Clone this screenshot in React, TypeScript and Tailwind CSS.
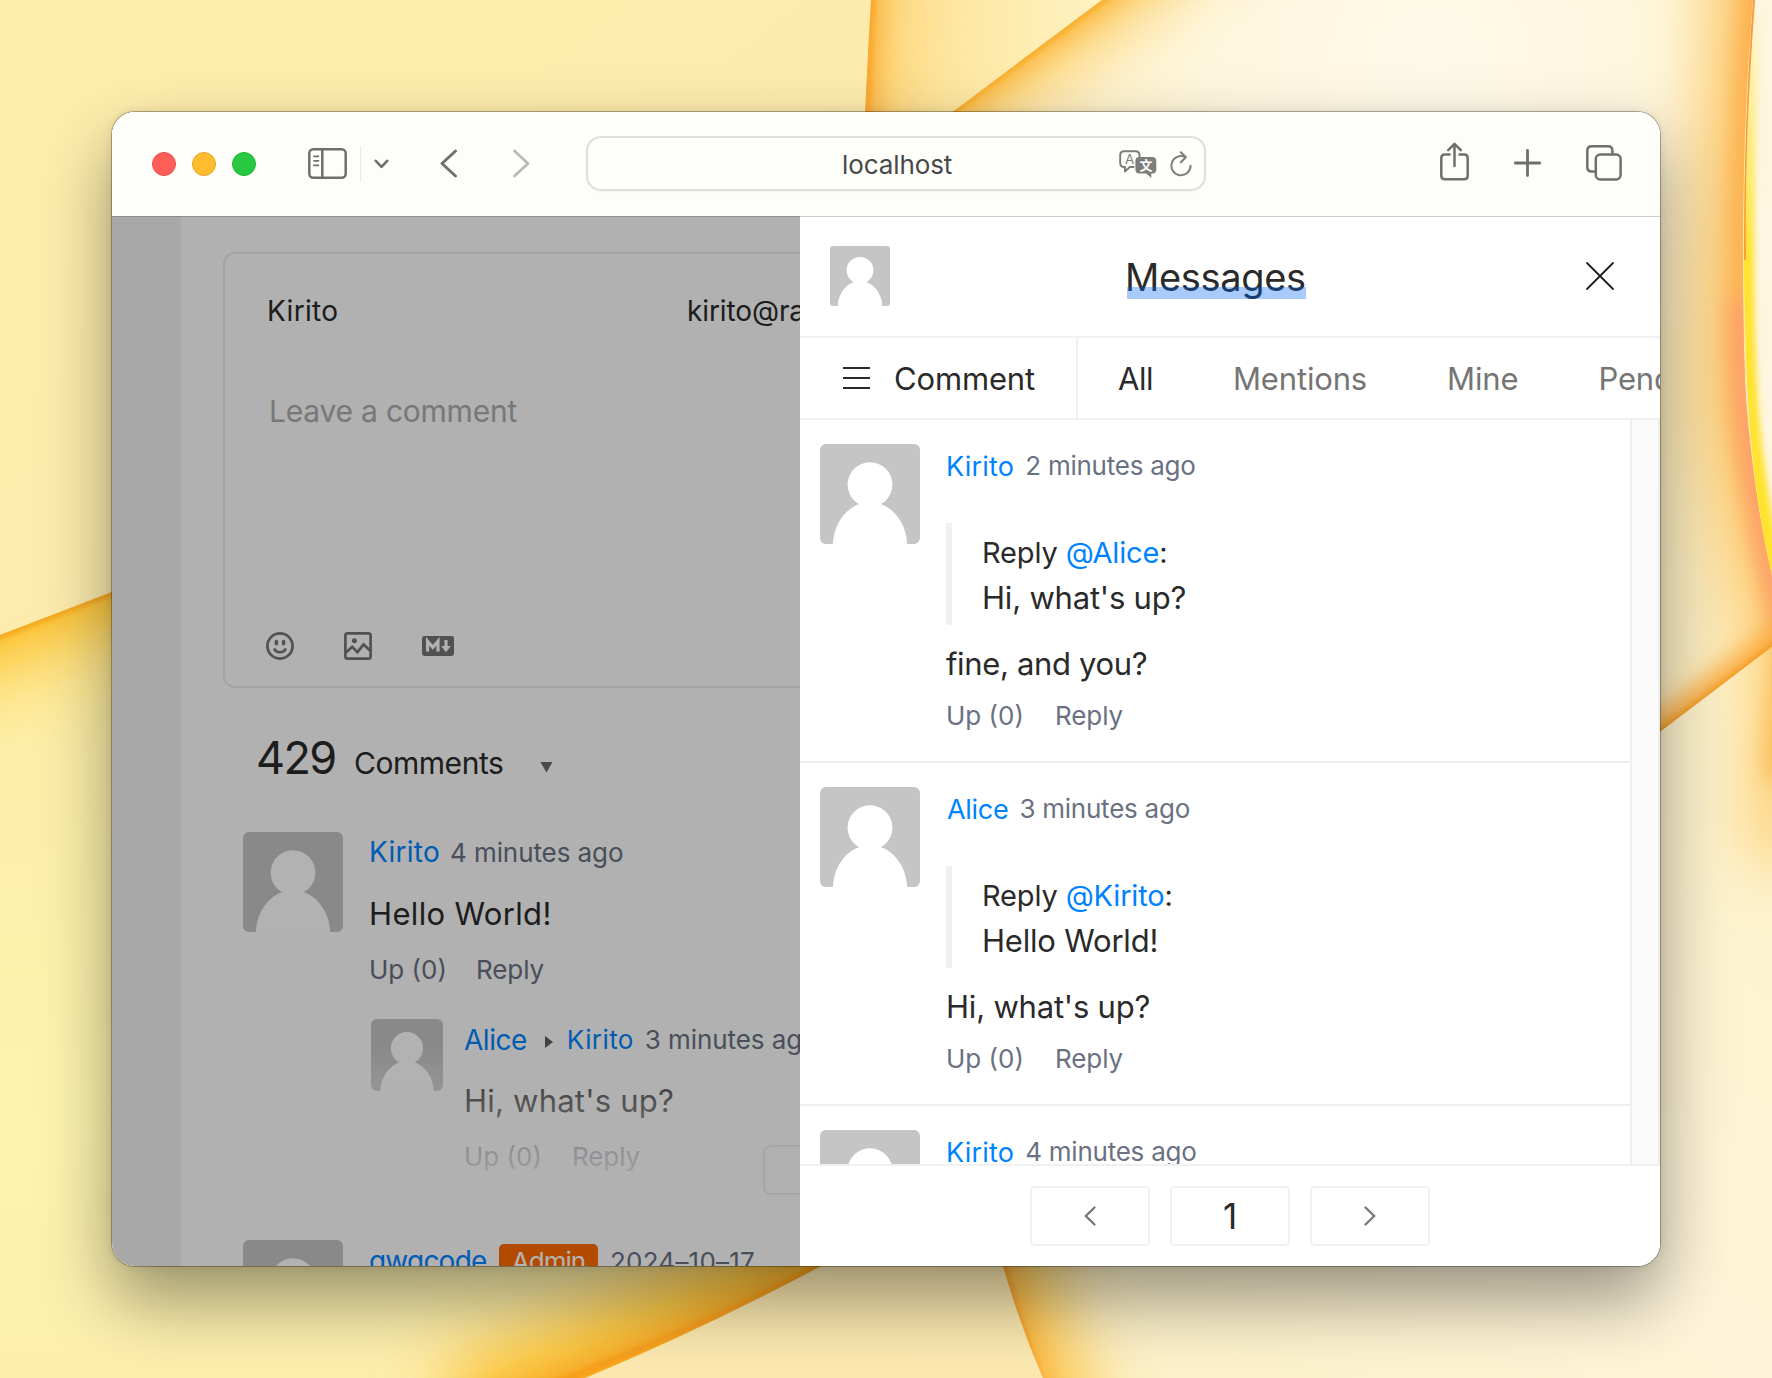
import React from 'react'

/* ---------- wallpaper ---------- */

function Wallpaper() {
  return (
    <svg className="absolute inset-0" width="1772" height="1378" viewBox="0 0 1772 1378">
      <defs>
        <linearGradient id="baseFill" x1="0" y1="0" x2="1" y2="1">
          <stop offset="0" stopColor="#feeeac" />
          <stop offset="0.4" stopColor="#fdeaae" />
          <stop offset="1" stopColor="#fbe7b2" />
        </linearGradient>
        <linearGradient id="leftFill" x1="0" y1="0" x2="0" y2="1">
          <stop offset="0" stopColor="#fee67e" />
          <stop offset="0.3" stopColor="#fdeeaa" />
          <stop offset="0.7" stopColor="#fdf3ae" />
          <stop offset="1" stopColor="#fdeeae" />
        </linearGradient>
        <linearGradient id="topFill" x1="0" y1="0" x2="1" y2="0">
          <stop offset="0" stopColor="#fddd86" />
          <stop offset="1" stopColor="#fef3c4" />
        </linearGradient>
        <radialGradient id="rightFill" gradientUnits="userSpaceOnUse" cx="1430" cy="60" r="420">
          <stop offset="0" stopColor="#fef9e8" />
          <stop offset="0.5" stopColor="#fef7df" />
          <stop offset="1" stopColor="#fdefc4" />
        </radialGradient>
        <linearGradient id="lowFill" x1="0" y1="1" x2="1" y2="0">
          <stop offset="0" stopColor="#fdf0c4" />
          <stop offset="0.5" stopColor="#fef5da" />
          <stop offset="1" stopColor="#fdf1c8" />
        </linearGradient>
        <filter id="b40" filterUnits="userSpaceOnUse" x="-200" y="-200" width="2172" height="1778">
          <feGaussianBlur stdDeviation="34" />
        </filter>
        <filter id="b12" filterUnits="userSpaceOnUse" x="-200" y="-200" width="2172" height="1778">
          <feGaussianBlur stdDeviation="12" />
        </filter>
        <filter id="b3" filterUnits="userSpaceOnUse" x="-200" y="-200" width="2172" height="1778">
          <feGaussianBlur stdDeviation="3" />
        </filter>
        <clipPath id="cLeft">
          <path d="M0 635L112 592L900 300L960 1190L821 1266Q700 1330 585 1378H0Z" />
        </clipPath>
        <clipPath id="cTop">
          <path d="M871 0H1102L952 112L700 300L858 300Q862 160 871 0Z" />
        </clipPath>
        <clipPath id="cRight">
          <path d="M1102 0H1753C1740 150 1742 320 1746 400Q1754 500 1772 570V647L1660 732L1400 900L760 256Z" />
        </clipPath>
        <clipPath id="cFar">
          <path d="M1753 0H1772V575Q1754 500 1748 400C1742 300 1742 150 1753 0Z" />
        </clipPath>
        <clipPath id="cLow">
          <path d="M1772 647L1660 732L940 1060L1003 1266Q1020 1325 1043 1378H1772Z" />
        </clipPath>
        <linearGradient id="rim" x1="0" y1="0" x2="0" y2="1">
          <stop offset="0" stopColor="#ffe32e" stopOpacity="0" />
          <stop offset="0.4" stopColor="#ffe32e" />
          <stop offset="1" stopColor="#ffe32e" />
        </linearGradient>
      </defs>

      <rect width="1772" height="1378" fill="url(#baseFill)" />

      <g clipPath="url(#cLeft)">
        <rect y="500" width="1000" height="878" fill="url(#leftFill)" />
        <g fill="none" stroke="#fbc02d">
          <path d="M-160 696L0 635L112 592L300 520" strokeWidth="60" filter="url(#b40)" />
          <path d="M1000 1168L821 1266Q700 1330 460 1420" strokeWidth="110" filter="url(#b40)" />
          <path d="M-160 696L0 635L112 592L300 520" strokeWidth="18" filter="url(#b12)" />
          <path d="M1000 1168L821 1266Q700 1330 460 1420" stroke="#f8a82c" strokeWidth="24" filter="url(#b12)" />
          <path d="M-160 696L0 635L112 592L300 520M1000 1168L821 1266Q700 1330 460 1420" stroke="#f59211" strokeWidth="5" filter="url(#b3)" />
        </g>
      </g>

      <g clipPath="url(#cTop)">
        <rect x="840" width="262" height="300" fill="url(#topFill)" />
        <g fill="none">
          <path d="M876 -100Q864 160 858 340" stroke="#fcc860" strokeWidth="40" filter="url(#b40)" />
          <path d="M876 -100Q864 160 858 340" stroke="#fbb03a" strokeWidth="22" filter="url(#b12)" />
          <path d="M876 -100Q864 160 858 340" stroke="#fb9a18" strokeWidth="5" filter="url(#b3)" />
        </g>
      </g>

      <g clipPath="url(#cRight)">
        <rect x="760" width="1012" height="900" fill="url(#rightFill)" />
        <g fill="none" stroke="#fcc95a">
          <path d="M1236 -100L1102 0L952 112L700 300" strokeWidth="60" filter="url(#b40)" />
          <path d="M1236 -100L1102 0L952 112L700 300" stroke="#fbb234" strokeWidth="20" filter="url(#b12)" />
          <path d="M1236 -100L1102 0L952 112L700 300" stroke="#f79c10" strokeWidth="4" filter="url(#b3)" />
          <path d="M1763 -100C1740 150 1742 320 1746 400Q1754 500 1810 700" stroke="#fcc460" strokeWidth="80" filter="url(#b40)" />
          <path d="M1763 -100C1740 150 1742 320 1746 400Q1754 500 1810 700" stroke="#fda843" strokeWidth="24" filter="url(#b12)" />
          <path d="M1744 300Q1748 500 1800 660" stroke="#fd9a78" strokeWidth="22" filter="url(#b12)" />
          <path d="M1880 566L1660 732L1500 850" stroke="#fba838" strokeWidth="30" filter="url(#b12)" />
          <path d="M1880 566L1660 732L1500 850" stroke="#ef8a10" strokeWidth="4" filter="url(#b3)" />
        </g>
      </g>

      <g clipPath="url(#cFar)">
        <rect x="1730" width="42" height="600" fill="#fff6e2" />
        <path d="M1753 0C1742 150 1742 300 1748 400Q1754 500 1790 640" fill="none" stroke="url(#rim)" strokeWidth="20" filter="url(#b3)" />
        <path d="M1753 0C1744 120 1743 200 1744 260" fill="none" stroke="#fb9a3a" strokeWidth="4" />
      </g>

      <g clipPath="url(#cLow)">
        <rect x="900" y="600" width="872" height="778" fill="url(#lowFill)" />
        <g fill="none" stroke="#fcc850">
          <path d="M960 1120L1003 1266Q1020 1325 1080 1500" strokeWidth="90" filter="url(#b40)" />
          <path d="M960 1120L1003 1266Q1020 1325 1080 1500" stroke="#fbb540" strokeWidth="24" filter="url(#b12)" />
          <path d="M960 1120L1003 1266Q1020 1325 1080 1500" stroke="#f7961a" strokeWidth="5" filter="url(#b3)" />
          <path d="M1800 560L1784 780" stroke="#fba42c" strokeWidth="36" filter="url(#b12)" />
          <path d="M1800 560L1784 860" stroke="#fcc862" strokeWidth="60" filter="url(#b40)" />
        </g>
      </g>
    </svg>
  )
}

/* ---------- shared pieces ---------- */

function Avatar({ className }: { className: string }) {
  return (
    <svg viewBox="0 0 100 100" className={`shrink-0 bg-[#c5c5c5] ${className}`}>
      <circle cx="50" cy="40.6" r="22.4" fill="#fff" />
      <path d="M12.8 100C14 80 25 65 39.5 60H60.5C75 65 86 80 87.2 100Z" fill="#fff" />
    </svg>
  )
}

function ToolbarIcon({ className, viewBox, children }: { className: string; viewBox: string; children: React.ReactNode }) {
  return (
    <svg viewBox={viewBox} className={`shrink-0 ${className}`} fill="none" stroke="#6f6f6e" strokeWidth="2.5" strokeLinecap="round" strokeLinejoin="round">
      {children}
    </svg>
  )
}

/* ---------- browser toolbar ---------- */

function Toolbar() {
  return (
    <div className="flex h-[105px] shrink-0 items-center border-b border-[#cdcdc9] bg-[#fdfdf9] pl-[40px]">
      <div className="flex gap-4">
        <span className="size-6 rounded-full border border-[#e9524a] bg-[#ff5f57]" />
        <span className="size-6 rounded-full border border-[#e5a726] bg-[#febc2e]" />
        <span className="size-6 rounded-full border border-[#23b338] bg-[#28c840]" />
      </div>
      <ToolbarIcon className="mb-[2px] ml-[52px] h-[31px] w-[39px]" viewBox="0 0 39 31">
        <rect x="1.3" y="1.3" width="36.4" height="28.4" rx="4" />
        <path d="M14.3 1.5V29.5" />
        <path d="M6 8.3h4.4M6 12.8h4.4M6 17.3h4.4" strokeWidth="1.8" />
      </ToolbarIcon>
      <span className="ml-[13px] h-[36px] w-px bg-[#e9e9e6]" />
      <ToolbarIcon className="mb-px ml-[13px] h-[10px] w-[15px]" viewBox="0 0 15 10">
        <path d="M1.8 1.8L7.5 7.8L13.2 1.8" strokeWidth="2.6" />
      </ToolbarIcon>
      <ToolbarIcon className="mb-[2px] ml-[51px] h-[29px] w-[18px]" viewBox="0 0 18 29">
        <path d="M15.5 2L2 14.5L15.5 27" strokeWidth="2.9" />
      </ToolbarIcon>
      <svg viewBox="0 0 18 29" className="mb-[2px] ml-[54px] h-[29px] w-[18px] shrink-0" fill="none" stroke="#b9b9b7" strokeWidth="2.7" strokeLinecap="round" strokeLinejoin="round">
        <path d="M2.5 2L16 14.5L2.5 27" />
      </svg>
      <div className="mb-px ml-[56px] flex h-[55px] w-[620px] items-center rounded-[15px] border-2 border-[#dededb] bg-[#fefefb] shadow-[0_1px_2px_rgba(0,0,0,0.04)]">
        <span className="mt-[3px] ml-[254px] w-[277px] text-[26px] leading-[40px] tracking-[-0.1px] text-[#48484a]">localhost</span>
        <svg viewBox="0 0 38 28" className="h-[28px] w-[38px] shrink-0" fill="none">
          <path d="M20.5 9V5.2Q20.5 1.2 16.5 1.2H5.2Q1.2 1.2 1.2 5.2V13Q1.2 17 5.2 17H6v4.4L10.8 17H14.5" stroke="#7d7d7c" strokeWidth="2" strokeLinejoin="round" strokeLinecap="round" />
          <text x="10.6" y="13.9" fontSize="13.5" fill="#7d7d7c" textAnchor="middle">A</text>
          <path d="M20.5 7H33Q37.3 7 37.3 11V19.5Q37.3 23.5 33 23.5H32.3V28L27.2 23.5H20.5Q16.4 23.5 16.4 19.5V11Q16.4 7 20.5 7Z" fill="#7d7d7c" />
          <text x="26.9" y="20.2" fontSize="13" fontWeight="700" fill="#fff" textAnchor="middle" className="font-['Noto_Sans_CJK_SC',sans-serif]">文</text>
        </svg>
        <svg viewBox="0 0 22 26" className="ml-[13px] h-[26px] w-[22px] shrink-0" fill="none" stroke="#7d7d7c" strokeWidth="2" strokeLinecap="round" strokeLinejoin="round">
          <path d="M15.3 6.1A9.6 9.6 0 1 0 20.6 14.8" />
          <path d="M10.8 1.2L15.8 6.2L10.8 11.2" />
        </svg>
      </div>
      <ToolbarIcon className="mb-[5px] ml-[234px] h-[39px] w-[29px]" viewBox="0 0 29 39">
        <path d="M9.5 12.6H4.8Q1.3 12.6 1.3 16.1V33.8Q1.3 37.3 4.8 37.3H24.2Q27.7 37.3 27.7 33.8V16.1Q27.7 12.6 24.2 12.6H19.5" />
        <path d="M14.5 24V2M8.2 8.2L14.5 1.8L20.8 8.2" />
      </ToolbarIcon>
      <ToolbarIcon className="mb-[3px] ml-[45px] h-[28px] w-[27px]" viewBox="0 0 27 28">
        <path d="M13.5 1.5V26.5M1.3 14H25.7" strokeWidth="2.8" />
      </ToolbarIcon>
      <ToolbarIcon className="mb-[3px] ml-[45px] h-[36px] w-[36px]" viewBox="0 0 36 36">
        <rect x="9.8" y="9.6" width="24.8" height="24.8" rx="4.5" />
        <path d="M9.5 26.4H5.8Q1.3 26.4 1.3 21.9V5.8Q1.3 1.3 5.8 1.3H21.9Q26.4 1.3 26.4 5.8V9.3" />
      </ToolbarIcon>
    </div>
  )
}

/* ---------- page underneath the drawer ---------- */

function Editor() {
  return (
    <div className="mt-[35px] ml-[42px] flex h-[436px] w-[1350px] flex-col rounded-[12px] border-2 border-[#ebebeb] pt-[37px] pb-[26px] pl-[42px] text-[#2a2a2a]">
      <div className="flex text-[28px] leading-[40px]">
        <span className="w-[420px] tracking-[0.3px]">Kirito</span>
        <span className="tracking-[-0.1px]">kirito@ra.com</span>
      </div>
      <div className="mt-[60px] ml-[2px] text-[30px] leading-[40px] tracking-[-0.22px] text-[#acacac]">Leave a comment</div>
      <div className="mt-auto flex h-[28px] items-center text-[#757575]">
        <svg viewBox="0 0 28 28" className="-ml-px size-[28px]" fill="none" stroke="currentColor" strokeWidth="2.7">
          <circle cx="14" cy="14" r="12.6" />
          <path d="M8.3 16.4a5.9 5.2 0 0 0 11.4 0" />
          <ellipse cx="10.4" cy="10.6" rx="1.8" ry="2.9" fill="currentColor" stroke="none" />
          <ellipse cx="17.6" cy="10.6" rx="1.8" ry="2.9" fill="currentColor" stroke="none" />
        </svg>
        <svg viewBox="0 0 28 28" className="ml-[50px] size-[28px]" fill="none" stroke="currentColor" strokeWidth="2.7" strokeLinejoin="miter">
          <rect x="1.4" y="1.4" width="25.2" height="25.2" rx="2.2" />
          <path d="M2 20.5L8.2 14.8L13.4 20.2L19.6 12.4L26 18.4" />
          <circle cx="10.4" cy="8.8" r="2.5" fill="currentColor" stroke="none" />
        </svg>
        <svg viewBox="0 0 32 20" className="ml-[50px] h-[20px] w-[32px]" fill="none">
          <rect width="32" height="20" rx="2.4" fill="currentColor" />
          <path d="M5.6 15.6V5.4L10.8 11.4L16 5.4V15.6" stroke="#fefefe" strokeWidth="3.2" />
          <path d="M24 4V10.5" stroke="#fefefe" strokeWidth="3.2" />
          <path d="M19.2 10H28.8L24 16.2Z" fill="#fefefe" />
        </svg>
      </div>
    </div>
  )
}

function Actions({ gapClass }: { gapClass: string }) {
  return (
    <div className="flex text-[26px] leading-[40px] text-[#697182]">
      <span className={gapClass}>Up (0)</span>
      <span className="tracking-[-0.1px]">Reply</span>
    </div>
  )
}

function Page() {
  return (
    <div className="flex h-full">
      <div className="w-[69px] shrink-0 bg-[#f1f1f1]" />
      <div className="w-[1479px] shrink-0 bg-[#fefefe]">
        <Editor />
        <div className="mt-[40px] ml-[75px] flex items-baseline text-[#2a2a2a]">
          <span className="w-[98px] text-[45px] leading-[60px] tracking-[-1.6px]">429</span>
          <span className="text-[30px] tracking-[-0.46px]">Comments</span>
          <svg viewBox="0 0 13 12" className="ml-[37px] h-[12px] w-[13px] fill-[#6a6a6a]">
            <path d="M0.5 0H12.5L6.5 10.5Z" />
          </svg>
        </div>

        <div className="mt-[44px] ml-[62px] flex gap-[26px]">
          <Avatar className="size-[100px] rounded-[6px]" />
          <div>
            <div className="flex leading-[42px]">
              <span className="w-[81px] text-[28px] leading-[41px] tracking-[0.26px] text-[#0083ff]">Kirito</span>
              <span className="text-[26px] tracking-[-0.08px] text-[#697182]">4 minutes ago</span>
            </div>
            <div className="mt-[17px] mb-[14px] text-[31px] leading-[45px] tracking-[0.34px] text-[#2a2a2a]">Hello World!</div>
            <Actions gapClass="w-[107px]" />

            <div className="relative mt-[29px] ml-[2px] flex gap-[21px]">
              <Avatar className="size-[72px] rounded-[6px]" />
              <div className="w-[700px]">
                <div className="flex items-center leading-[41px] text-[#0083ff]">
                  <span className="text-[28px] tracking-[-0.47px]">Alice</span>
                  <svg viewBox="0 0 8 12" className="mt-[3px] ml-[18px] h-[12px] w-[8px] fill-[#5f5f5f]">
                    <path d="M0 0L8 6L0 12Z" />
                  </svg>
                  <span className="ml-[14px] w-[78px] text-[26px] leading-[42px] tracking-[0.42px]">Kirito</span>
                  <span className="text-[26px] leading-[42px] tracking-[-0.08px] text-[#697182]">3 minutes ago</span>
                </div>
                <div className="mt-[17px] mb-[14px] text-[31px] leading-[45px] tracking-[0.22px] text-[#2a2a2a]">Hi, what's up?</div>
                <Actions gapClass="w-[108px]" />
              </div>
              <div className="absolute top-[26px] right-0 left-0 h-[160px] bg-linear-to-b from-[#fefefe]/0 to-[#fefefe]" />
              <div className="absolute top-[126px] left-[392px] h-[50px] w-[240px] rounded-[8px] border-2 border-[#eeeeee] bg-[#fefefe]" />
            </div>
          </div>
        </div>

        <div className="mt-[63px] ml-[62px] flex gap-[26px]">
          <Avatar className="size-[100px] rounded-[6px]" />
          <div className="flex h-[40px] items-baseline leading-[42px]">
            <span className="w-[130px] text-[28px] tracking-[-0.77px] text-[#0083ff]">qwqcode</span>
            <span className="flex h-[36px] w-[99px] items-center justify-center rounded-[5px] bg-[#ff6c00] text-[26px] tracking-[-0.98px] text-white">Admin</span>
            <span className="ml-[12px] text-[26px] tracking-[0.22px] text-[#697182]">2024–10–17</span>
          </div>
        </div>
      </div>
    </div>
  )
}

/* ---------- messages drawer ---------- */

type Message = { name: string; time: string; to?: string; quote?: string; body?: string }

const messages: Message[] = [
  { name: 'Kirito', time: '2 minutes ago', to: '@Alice', quote: "Hi, what's up?", body: 'fine, and you?' },
  { name: 'Alice', time: '3 minutes ago', to: '@Kirito', quote: 'Hello World!', body: "Hi, what's up?" },
  { name: 'Kirito', time: '4 minutes ago' },
]

function MessageItem({ m }: { m: Message }) {
  return (
    <div className="flex h-[343px] shrink-0 gap-[26px] border-b-2 border-[#efeff0] pt-[24px] pl-[20px]">
      <Avatar className="size-[100px] rounded-[6px]" />
      <div className="text-[#2a2a2a]">
        <div className="flex h-[45px] gap-[11px]">
          <span className={`text-[27px] leading-[45px] text-[#0083ff] ${m.name === 'Alice' ? 'pl-px tracking-[-0.3px]' : 'tracking-[0.2px]'}`}>{m.name}</span>
          <span className="text-[26px] leading-[43px] tracking-[-0.24px] text-[#697182]">{m.time}</span>
        </div>
        {m.quote && (
          <div className="mt-[34px] h-[102px] border-l-6 border-[#eff0f2] pt-[7px] pl-[30px] leading-[45px]">
            <div className="text-[29px] tracking-[-0.15px]">
              Reply <span className="text-[#0083ff]">{m.to}</span>:
            </div>
            <div className="text-[31px] tracking-[-0.2px]">{m.quote}</div>
          </div>
        )}
        {m.body && (
          <>
            <div className={`mt-[16px] mb-[10px] text-[31px] leading-[45px] ${m.body.startsWith('fine') ? 'tracking-[-0.35px]' : 'tracking-[-0.2px]'}`}>{m.body}</div>
            <Actions gapClass="w-[109px]" />
          </>
        )}
      </div>
    </div>
  )
}

function Drawer() {
  return (
    <div className="absolute top-0 right-0 flex h-full w-[860px] flex-col bg-white">
      <div className="flex h-[121px] shrink-0 items-center border-b-2 border-[#f1f1f1] pl-[30px]">
        <Avatar className="mb-[2px] size-[60px] rounded-[3px]" />
        <div className="relative ml-[235px] text-[38px] leading-[46px] tracking-[-0.34px] text-[#2a2a2a]">
          Messages
          <span className="absolute top-[33px] right-0 left-[2px] h-[12px] bg-[#0366f3]/34" />
        </div>
        <svg viewBox="0 0 28 28" className="mr-[46px] mb-[2px] ml-auto size-[28px]" stroke="#1f1f1f" strokeWidth="1.8" strokeLinecap="round">
          <path d="M1 1L27 27M27 1L1 27" />
        </svg>
      </div>

      <div className="flex h-[82px] shrink-0 overflow-hidden border-b-2 border-[#f0f0f0] text-[31px] leading-[81px] text-[#757575]">
        <div className="flex w-[278px] shrink-0 items-center border-r-2 border-[#f0f0f0] pl-[43px] text-[#2a2a2a]">
          <svg viewBox="0 0 27 22" className="h-[22px] w-[27px]" stroke="#2a2a2a" strokeWidth="2">
            <path d="M0 1H27M0 11H27M0 21H27" />
          </svg>
          <span className="ml-[24px] tracking-[-0.15px]">Comment</span>
        </div>
        <div className="flex gap-[80px] pl-[40px] tracking-[-0.14px]">
          <span className="tracking-[-0.5px] text-[#2a2a2a]">All</span>
          <span>Mentions</span>
          <span>Mine</span>
          <span>Pending</span>
        </div>
      </div>

      <div className="flex min-h-0 flex-1">
        <div className="flex w-[830px] flex-col overflow-hidden">
          {messages.map((m) => (
            <MessageItem key={m.time} m={m} />
          ))}
        </div>
        <div className="flex-1 border-r-2 border-l-2 border-[#efeff0] bg-[#fafafa]" />
      </div>

      <div className="flex h-[102px] shrink-0 justify-center gap-[20px] border-t-2 border-[#f0f0f0] pt-[20px]">
        <div className="flex h-[60px] w-[120px] items-center justify-center rounded-[5px] border-2 border-[#f0f0f0]">
          <svg viewBox="0 0 12 20" className="h-[20px] w-[12px]" fill="none" stroke="#757575" strokeWidth="2.2" strokeLinecap="round">
            <path d="M10.5 1.5L1.8 10L10.5 18.5" />
          </svg>
        </div>
        <div className="flex h-[60px] w-[120px] items-center justify-center rounded-[5px] border-2 border-[#f0f0f0] text-[35px] text-[#2a2a2a]">1</div>
        <div className="flex h-[60px] w-[120px] items-center justify-center rounded-[5px] border-2 border-[#f0f0f0]">
          <svg viewBox="0 0 12 20" className="h-[20px] w-[12px]" fill="none" stroke="#757575" strokeWidth="2.2" strokeLinecap="round">
            <path d="M1.5 1.5L10.2 10L1.5 18.5" />
          </svg>
        </div>
      </div>
    </div>
  )
}

export default function App() {
  return (
    <div className="relative h-[1378px] w-[1772px] overflow-hidden px-[112px] pt-[112px] font-['Inter',sans-serif] whitespace-nowrap">
      <Wallpaper />
      <div className="relative h-[1154px] rounded-[23px] shadow-[0_0_0_1px_rgba(0,0,0,0.28),0_0_10px_rgba(0,0,0,0.1),0_34px_70px_rgba(0,0,0,0.4)]">
        <div className="flex h-full flex-col overflow-hidden rounded-[23px] bg-white">
          <Toolbar />
          <div className="relative min-h-0 flex-1">
            <div className="h-full overflow-hidden">
              <Page />
            </div>
            <div className="absolute -top-px bottom-0 left-0 w-[688px] bg-black/30" />
            <Drawer />
          </div>
        </div>
      </div>
    </div>
  )
}
